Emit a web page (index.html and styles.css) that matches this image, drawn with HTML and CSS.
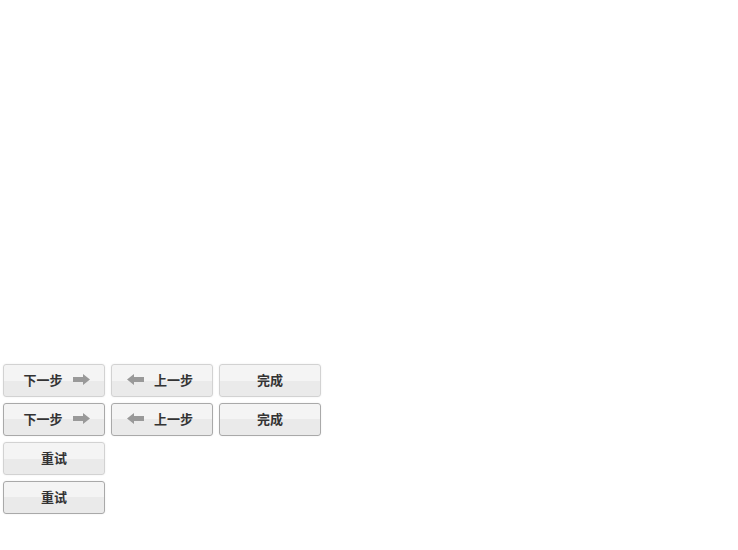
FILE: index.html
```html
<!DOCTYPE html>
<html>
<head>
<meta charset="utf-8">
<link rel="stylesheet" href="styles.css">
</head>
<body>
<div class="wrap">
  <div class="row">
    <button class="btn next"><span>下一步</span><svg class="arr" width="17" height="11" viewBox="0 0 17 11"><path d="M0 3h10V0l7 5.5L10 11V8H0z" fill="#999"/></svg></button>
    <button class="btn prev"><svg class="arr" width="17" height="11" viewBox="0 0 17 11"><path d="M17 3H7V0L0 5.5 7 11V8h10z" fill="#999"/></svg><span>上一步</span></button>
    <button class="btn"><span>完成</span></button>
  </div>
  <div class="row">
    <button class="btn next hover"><span>下一步</span><svg class="arr" width="17" height="11" viewBox="0 0 17 11"><path d="M0 3h10V0l7 5.5L10 11V8H0z" fill="#999"/></svg></button>
    <button class="btn prev hover"><svg class="arr" width="17" height="11" viewBox="0 0 17 11"><path d="M17 3H7V0L0 5.5 7 11V8h10z" fill="#999"/></svg><span>上一步</span></button>
    <button class="btn hover"><span>完成</span></button>
  </div>
  <div class="row">
    <button class="btn"><span>重试</span></button>
  </div>
  <div class="row">
    <button class="btn hover"><span>重试</span></button>
  </div>
</div>
</body>
</html>
```
FILE: styles.css
```css
html, body { margin: 0; padding: 0; background: #fff; }
.wrap { padding: 361px 0 0 0; }
.row { display: flex; }
.btn {
  box-sizing: border-box;
  width: 102px;
  height: 33px;
  margin: 3px;
  padding: 0 0 2px 0;
  border: 1px solid #d2d2d2;
  border-radius: 3px;
  background: linear-gradient(to bottom, #f4f4f4 0, #f4f4f4 50%, #eaeaea 50%, #eaeaea 100%);
  box-shadow: 0 0 2px rgba(0,0,0,0.08);
  display: flex;
  align-items: center;
  justify-content: center;
  gap: 10px;
  font-family: "Noto Sans CJK SC", "Liberation Sans", sans-serif;
  font-size: 13px;
  font-weight: bold;
  color: #333;
  line-height: 1;
}
.btn.next { padding-left: 5px; }
.btn.prev { padding-right: 4px; }
.btn.hover { border-color: #a9a9a9; }
.arr { display: block; }
```
